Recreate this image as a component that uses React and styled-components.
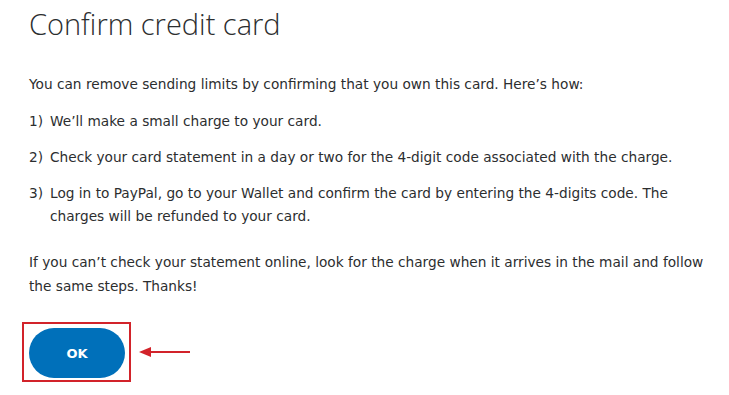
import React from "react";
import styled, { createGlobalStyle } from "styled-components";

const Global = createGlobalStyle`
  html, body {
    margin: 0;
    padding: 0;
    background: #fff;
  }
  body {
    font-family: "DejaVu Sans", "Liberation Sans", sans-serif;
    color: #2c2e2f;
  }
`;

const Page = styled.div`
  width: 729px;
  height: 395px;
  overflow: hidden;
  padding: 4px 8px 0 29px;
  box-sizing: border-box;
`;

const Title = styled.h1`
  margin: 0;
  font-family: "Open Sans", "Liberation Sans", sans-serif;
  font-weight: 300;
  font-size: 29px;
  line-height: 40px;
  color: #2c2e2f;
`;

const Para = styled.p`
  margin: ${(p) => p.$top || 0}px 0 0 0;
  font-size: 13.7px;
  line-height: 24px;
`;

const Steps = styled.ol`
  list-style: none;
  margin: 14px 0 0 0;
  padding: 0;
  display: flex;
  flex-direction: column;
  gap: 13px;
`;

const Step = styled.li`
  display: flex;
  font-size: 13.7px;
  line-height: 23px;
`;

const Num = styled.span`
  width: 21px;
  flex: none;
`;

const Actions = styled.div`
  display: flex;
  align-items: center;
  margin-top: 24px;
  margin-left: -7px;
`;

const Highlight = styled.div`
  border: 2px solid #d2232a;
  padding: 4px 4px 2px 5px;
`;

const OkButton = styled.button`
  width: 96px;
  height: 50px;
  border: none;
  border-radius: 25px;
  background: #0070ba;
  color: #fff;
  font-family: "DejaVu Sans", sans-serif;
  font-weight: bold;
  font-size: 13px;
  cursor: pointer;
`;

const Arrow = styled.svg`
  margin-left: 8px;
`;

export default function App() {
  return (
    <>
      <Global />
      <Page>
        <Title>Confirm credit card</Title>
        <Para $top={28}>
          You can remove sending limits by confirming that you own this card. Here’s how:
        </Para>
        <Steps>
          <Step>
            <Num>1)</Num>
            <span>We’ll make a small charge to your card.</span>
          </Step>
          <Step>
            <Num>2)</Num>
            <span>Check your card statement in a day or two for the 4-digit code associated with the charge.</span>
          </Step>
          <Step>
            <Num>3)</Num>
            <span>
              Log in to PayPal, go to your Wallet and confirm the card by entering the 4-digits code. The charges will be refunded to your card.
            </span>
          </Step>
        </Steps>
        <Para $top={22}>
          If you can’t check your statement online, look for the charge when it arrives in the mail and follow the same steps. Thanks!
        </Para>
        <Actions>
          <Highlight>
            <OkButton>OK</OkButton>
          </Highlight>
          <Arrow width="52" height="12" viewBox="0 0 52 12">
            <line x1="8" y1="6" x2="51" y2="6" stroke="#d2232a" strokeWidth="2" />
            <polygon points="0,6 12,1 12,11" fill="#d2232a" />
          </Arrow>
        </Actions>
      </Page>
    </>
  );
}
